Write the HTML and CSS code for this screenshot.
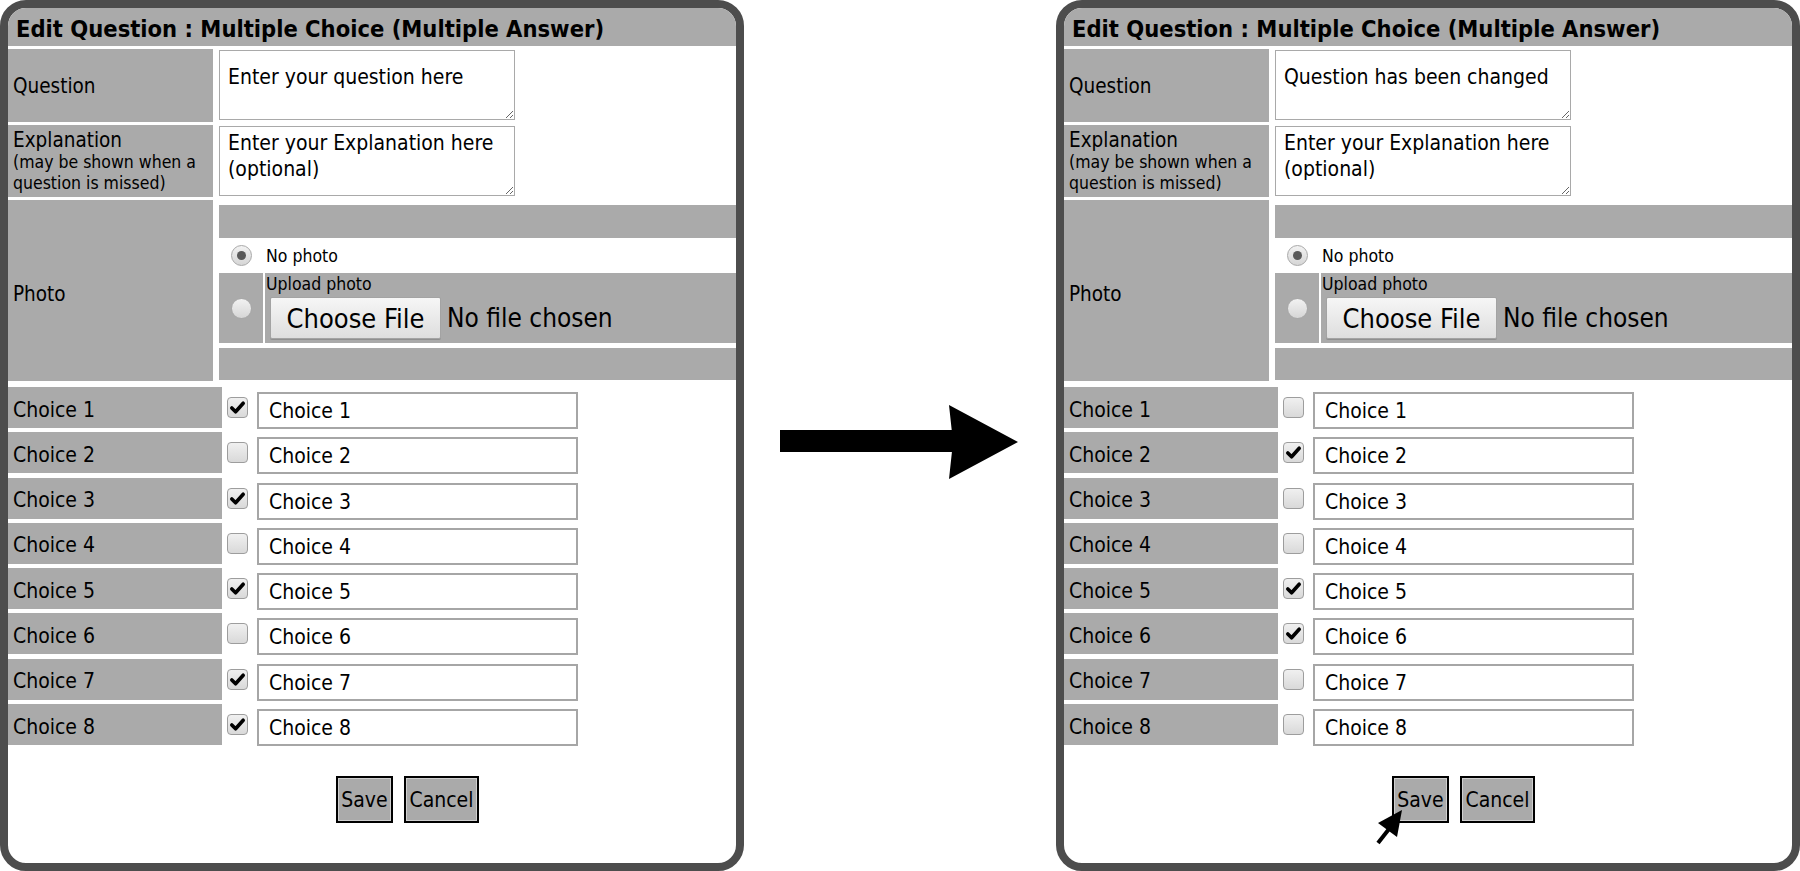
FILE: index.html
```html
<!DOCTYPE html>
<html>
<head>
<meta charset="utf-8">
<link rel="stylesheet" href="styles.css">
</head>
<body>
<div class="stage">
  <section class="panel">
    <div class="title">Edit Question : Multiple Choice (Multiple Answer)</div>
    <div class="fields">
      <div class="lbl">Question</div>
      <div class="cell"><textarea class="ta ta-q">Enter your question here</textarea></div>
      <div class="lbl"><span>Explanation</span><span class="sub">(may be shown when a question is missed)</span></div>
      <div class="cell"><textarea class="ta ta-e">Enter your Explanation here (optional)</textarea></div>
      <div class="lbl lbl-photo">Photo</div>
      <div class="photo">
        <div class="band"></div>
        <div class="opt-none"><span class="rb on"></span><span>No photo</span></div>
        <div class="opt-up">
          <div class="rcell"><span class="rb"></span></div>
          <div class="ucell">
            <div class="cap">Upload photo</div>
            <div class="filerow"><span class="filebtn">Choose File</span><span class="nofile">No file chosen</span></div>
          </div>
        </div>
        <div class="band b2"></div>
      </div>
    </div>
    <div class="choices">
      <div class="clbl">Choice 1</div><div class="ccb"><span class="cb on"><svg viewBox="0 0 20 20"><path d="M4 10.5 L8 14.5 L16 5.5" /></svg></span></div><div class="cin">Choice 1</div>
      <div class="clbl">Choice 2</div><div class="ccb"><span class="cb"></span></div><div class="cin">Choice 2</div>
      <div class="clbl">Choice 3</div><div class="ccb"><span class="cb on"><svg viewBox="0 0 20 20"><path d="M4 10.5 L8 14.5 L16 5.5" /></svg></span></div><div class="cin">Choice 3</div>
      <div class="clbl">Choice 4</div><div class="ccb"><span class="cb"></span></div><div class="cin">Choice 4</div>
      <div class="clbl">Choice 5</div><div class="ccb"><span class="cb on"><svg viewBox="0 0 20 20"><path d="M4 10.5 L8 14.5 L16 5.5" /></svg></span></div><div class="cin">Choice 5</div>
      <div class="clbl">Choice 6</div><div class="ccb"><span class="cb"></span></div><div class="cin">Choice 6</div>
      <div class="clbl">Choice 7</div><div class="ccb"><span class="cb on"><svg viewBox="0 0 20 20"><path d="M4 10.5 L8 14.5 L16 5.5" /></svg></span></div><div class="cin">Choice 7</div>
      <div class="clbl">Choice 8</div><div class="ccb"><span class="cb on"><svg viewBox="0 0 20 20"><path d="M4 10.5 L8 14.5 L16 5.5" /></svg></span></div><div class="cin">Choice 8</div>
    </div>
    <div class="actions"><span class="btn save">Save</span><span class="btn cancel">Cancel</span></div>
  </section>

  <div class="gap">
    <svg class="arrow" width="250" height="84" viewBox="0 0 250 84">
      <rect x="4" y="30" width="175" height="22" fill="#000"/>
      <polygon points="173,5 242,42 173,79 177,42" fill="#000"/>
    </svg>
  </div>

  <section class="panel">
    <div class="title">Edit Question : Multiple Choice (Multiple Answer)</div>
    <div class="fields">
      <div class="lbl">Question</div>
      <div class="cell"><textarea class="ta ta-q">Question has been changed</textarea></div>
      <div class="lbl"><span>Explanation</span><span class="sub">(may be shown when a question is missed)</span></div>
      <div class="cell"><textarea class="ta ta-e">Enter your Explanation here (optional)</textarea></div>
      <div class="lbl lbl-photo">Photo</div>
      <div class="photo">
        <div class="band"></div>
        <div class="opt-none"><span class="rb on"></span><span>No photo</span></div>
        <div class="opt-up">
          <div class="rcell"><span class="rb"></span></div>
          <div class="ucell">
            <div class="cap">Upload photo</div>
            <div class="filerow"><span class="filebtn">Choose File</span><span class="nofile">No file chosen</span></div>
          </div>
        </div>
        <div class="band b2"></div>
      </div>
    </div>
    <div class="choices">
      <div class="clbl">Choice 1</div><div class="ccb"><span class="cb"></span></div><div class="cin">Choice 1</div>
      <div class="clbl">Choice 2</div><div class="ccb"><span class="cb on"><svg viewBox="0 0 20 20"><path d="M4 10.5 L8 14.5 L16 5.5" /></svg></span></div><div class="cin">Choice 2</div>
      <div class="clbl">Choice 3</div><div class="ccb"><span class="cb"></span></div><div class="cin">Choice 3</div>
      <div class="clbl">Choice 4</div><div class="ccb"><span class="cb"></span></div><div class="cin">Choice 4</div>
      <div class="clbl">Choice 5</div><div class="ccb"><span class="cb on"><svg viewBox="0 0 20 20"><path d="M4 10.5 L8 14.5 L16 5.5" /></svg></span></div><div class="cin">Choice 5</div>
      <div class="clbl">Choice 6</div><div class="ccb"><span class="cb on"><svg viewBox="0 0 20 20"><path d="M4 10.5 L8 14.5 L16 5.5" /></svg></span></div><div class="cin">Choice 6</div>
      <div class="clbl">Choice 7</div><div class="ccb"><span class="cb"></span></div><div class="cin">Choice 7</div>
      <div class="clbl">Choice 8</div><div class="ccb"><span class="cb"></span></div><div class="cin">Choice 8</div>
    </div>
    <div class="actions"><span class="btn save">Save</span><span class="btn cancel">Cancel</span></div>
    <svg class="cursor" width="34" height="42" viewBox="0 0 34 42">
      <polygon points="30,4 6,17 25,31" fill="#000"/>
      <line x1="17" y1="23" x2="6" y2="37" stroke="#000" stroke-width="4"/>
    </svg>
  </section>
</div>
</body>
</html>
```

FILE: styles.css
```css
html, body {
  margin: 0;
  padding: 0;
  background: #fff;
}
body {
  font-family: "DejaVu Sans Condensed", "DejaVu Sans", sans-serif;
  font-stretch: condensed;
  color: #000;
}
.stage {
  display: flex;
  width: 1800px;
  height: 871px;
}
.panel {
  position: relative;
  flex: none;
  box-sizing: border-box;
  width: 744px;
  height: 871px;
  border: 8px solid #4d4d4d;
  border-radius: 26px;
  overflow: hidden;
  background: #fff;
}
.title {
  box-sizing: border-box;
  height: 38px;
  line-height: 36px;
  padding: 3px 0 0 8px;
  background: #aaa;
  font-weight: bold;
  font-size: 23.5px;
  white-space: nowrap;
}
.fields {
  display: grid;
  grid-template-columns: 205px 517px;
  grid-template-rows: 73px 72px 181px;
  gap: 3px 6px;
  margin-top: 3px;
}
.lbl {
  background: #aaa;
  display: flex;
  flex-direction: column;
  justify-content: center;
  padding-left: 5px;
  font-size: 20.5px;
  line-height: 24px;
}
.lbl-photo {
  padding-top: 6px;
  box-sizing: border-box;
}
.lbl .sub {
  font-size: 17.5px;
  line-height: 21px;
  padding-right: 4px;
}
.ta {
  display: block;
  box-sizing: border-box;
  width: 296px;
  height: 70px;
  margin: 1px 0 0 0;
  border: 1px solid #a9a9a9;
  font-family: inherit;
  font-stretch: condensed;
  font-size: 21px;
  line-height: 26px;
  padding: 3px 8px 2px 8px;
  color: #000;
  overflow: hidden;
  resize: both;
}
.ta-q {
  padding-top: 13px;
}
.photo {
  display: flex;
  flex-direction: column;
  padding-top: 5px;
}
.band {
  height: 33px;
  background: #aaa;
}
.band.b2 {
  height: 32px;
  margin-top: 5px;
}
.opt-none {
  height: 35px;
  display: flex;
  align-items: center;
  gap: 14px;
  padding-left: 12px;
  font-size: 17.5px;
}
.opt-up {
  height: 70px;
  display: flex;
  gap: 2px;
}
.rcell {
  width: 44px;
  background: #aaa;
  display: flex;
  align-items: center;
  justify-content: center;
}
.ucell {
  flex: 1;
  background: #aaa;
  padding-left: 1px;
}
.cap {
  font-size: 17.5px;
  line-height: 22px;
}
.filerow {
  display: flex;
  align-items: center;
  gap: 6px;
  margin: 2px 0 0 4px;
}
.filebtn {
  box-sizing: border-box;
  width: 171px;
  height: 42px;
  display: flex;
  align-items: center;
  justify-content: center;
  font-size: 27px;
  background: linear-gradient(#f6f6f6, #dedede);
  border: 1px solid #a3a3a3;
  border-radius: 2px;
  box-shadow: 0 1px 0 #8f8f8f;
}
.nofile {
  font-size: 26px;
}
.rb {
  box-sizing: border-box;
  display: flex;
  align-items: center;
  justify-content: center;
  width: 21px;
  height: 21px;
  border-radius: 50%;
  border: 1px solid #a8a8a8;
  background: linear-gradient(#f2f2f2, #d6d6d6);
}
.rb.on::after {
  content: "";
  width: 9px;
  height: 9px;
  border-radius: 50%;
  background: #5a5a5a;
}
.choices {
  display: grid;
  grid-template-columns: 214px 35px 321px;
  grid-auto-rows: 41px;
  row-gap: 4.3px;
  margin-top: 6px;
}
.clbl {
  box-sizing: border-box;
  background: #aaa;
  display: flex;
  align-items: center;
  padding: 4px 0 0 5px;
  font-size: 21px;
}
.ccb {
  display: flex;
  align-items: center;
  padding-left: 5px;
}
.cb {
  box-sizing: border-box;
  display: block;
  width: 21px;
  height: 21px;
  border-radius: 4px;
  border: 1px solid #9d9d9d;
  background: linear-gradient(#f0f0f0, #d9d9d9);
}
.cb svg {
  display: block;
  width: 19px;
  height: 19px;
}
.cb path {
  fill: none;
  stroke: #000;
  stroke-width: 3.8;
  stroke-linecap: round;
  stroke-linejoin: round;
}
.cin {
  box-sizing: border-box;
  margin-top: 5px;
  width: 321px;
  height: 37px;
  border: 2px solid #a6a6a6;
  padding: 1px 10px 0 10px;
  display: flex;
  align-items: center;
  font-size: 21px;
  background: #fff;
}
.actions {
  display: flex;
  gap: 11px;
  margin: 31px 0 0 328px;
}
.btn {
  box-sizing: border-box;
  height: 47px;
  display: flex;
  align-items: center;
  justify-content: center;
  border: 2px solid #000;
  box-shadow: inset 0 0 0 1px #cfcfcf;
  background: #aaa;
  font-size: 21px;
}
.save {
  width: 57px;
}
.cancel {
  width: 75px;
}
.gap {
  flex: none;
  width: 312px;
}
.arrow {
  display: block;
  margin: 400px 0 0 32px;
}
.cursor {
  position: absolute;
  left: 308px;
  top: 798px;
}
```
